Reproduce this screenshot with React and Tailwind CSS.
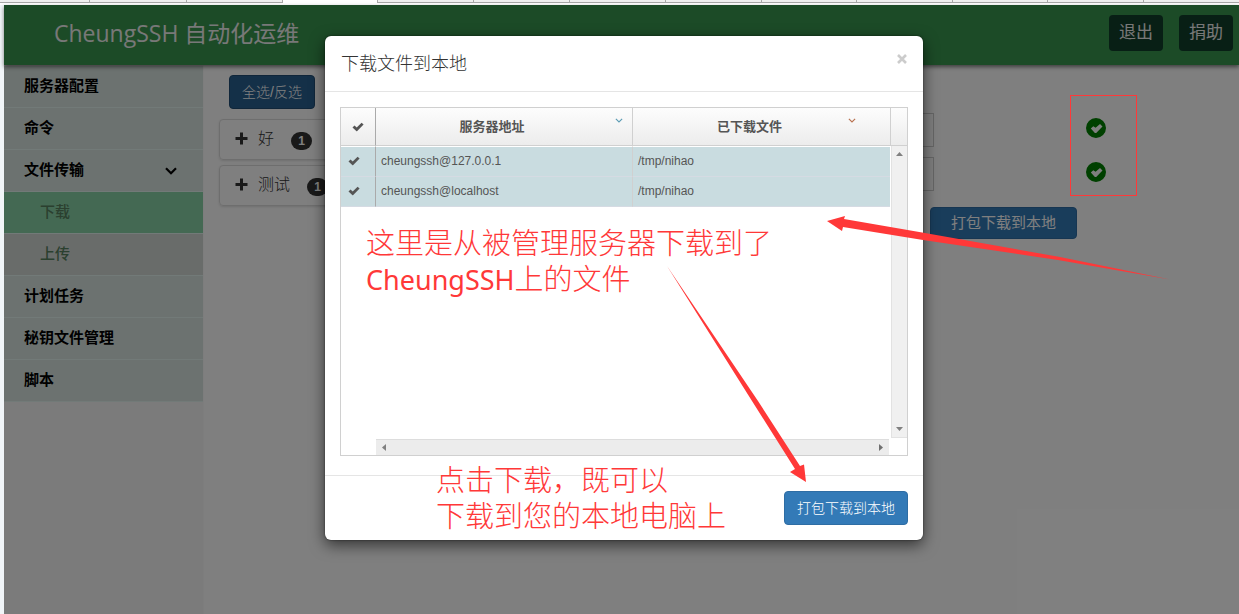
const tabs = [90, 97, 96];
const moreTabs = [96, 96, 96, 96, 95, 96, 95, 96];

const menu = [
  { label: "服务器配置" },
  { label: "命令" },
  { label: "文件传输", open: true },
  { label: "下载", sub: true, active: true },
  { label: "上传", sub: true },
  { label: "计划任务" },
  { label: "秘钥文件管理" },
  { label: "脚本" },
];

const groups = [
  { name: "好", count: 1 },
  { name: "测试", count: 1 },
];

const files = [
  { server: "cheungssh@127.0.0.1", path: "/tmp/nihao" },
  { server: "cheungssh@localhost", path: "/tmp/nihao" },
];

function Tick({ className }) {
  return (
    <svg viewBox="0 0 12 10" fill="currentColor" className={`h-2.5 w-3 ${className}`} aria-hidden="true">
      <path d="M0.500 5.600L2.500 3.600L4.700 5.500L9.600 0.700L11.600 2.500L5 9.300H4.500Z" />
    </svg>
  );
}

function Chevron({ className, weight }) {
  return (
    <svg viewBox="0 0 12 8" fill="none" stroke="currentColor" strokeWidth={weight} className={className} aria-hidden="true">
      <path d="M1 1.300L6 6.300L11 1.300" />
    </svg>
  );
}

function Plus() {
  return (
    <svg viewBox="0 0 13 13" fill="currentColor" className="mr-2.5 size-[13px]" aria-hidden="true">
      <path d="M5 0.500H8V5H12.500V8H8V12.500H5V8H0.500V5H5Z" />
    </svg>
  );
}

function Done({ className }) {
  return (
    <svg viewBox="0 0 20 20" className={`size-5 ${className}`} aria-hidden="true">
      <path
        fill="#008000"
        fillRule="evenodd"
        d="M10 0A10 10 0 1 1 10 20A10 10 0 1 1 10 0ZM4.800 10.500L8.900 15L10.200 15L16.500 8.600L14 6.100L9.600 9.800L7.300 8.200Z"
      />
    </svg>
  );
}

function TabStrip() {
  return (
    <div className="flex h-[5px] shrink-0 overflow-hidden bg-white" aria-hidden="true">
      <div className="flex h-[3px] bg-[#f0f0f0]">
        {tabs.map((w, i) => (
          <div key={i} className="h-full shrink-0 border-r border-b border-[#a8a8a8]" style={{ width: w }} />
        ))}
      </div>
      <div className="h-full w-[94px] shrink-0" />
      <div className="flex h-[3px] grow border-b border-l border-[#a8a8a8] bg-[#f0f0f0]">
        {moreTabs.map((w, i) => (
          <div key={i} className="h-full shrink-0 border-r border-[#a8a8a8]" style={{ width: w }} />
        ))}
      </div>
    </div>
  );
}

function Header() {
  return (
    <header className="relative flex h-[60px] items-center justify-between bg-[#38964e] pr-1.5 pl-[50px] shadow-[0_2px_4px_rgba(0,0,0,0.5)]">
      <h1 className="pb-1 font-['Open_Sans','Noto_Sans_CJK_SC',sans-serif] text-[23px] text-[#f0f0f0]">
        CheungSSH 自动化运维
      </h1>
      <div className="flex gap-4 pb-1">
        {["退出", "捐助"].map((t) => (
          <button key={t} type="button" className="h-9 w-[54px] rounded bg-[#103e2a] text-[17px] text-[#f0f0f0]">
            {t}
          </button>
        ))}
      </div>
    </header>
  );
}

function rowColor(item) {
  if (item.active) return "bg-[#88d2a6] pl-9 font-medium text-[#56805f]";
  if (item.sub) return "bg-[#d2d8d5] pl-9 font-medium text-[#56805f]";
  return "bg-[#d9e5e1] pl-5 font-bold text-black";
}

function Sidebar() {
  return (
    <nav className="w-[200px] shrink-0 border-r border-[#fafafa] bg-[#f6f6f6] pt-px">
      <ul>
        {menu.map((item) => (
          <li key={item.label}>
            <a
              href="#"
              className={`flex h-[42px] items-center justify-between border-b border-[#e4f4f0] pr-[26px] text-[15px] ${rowColor(item)}`}
            >
              {item.label}
              {item.open && <Chevron weight="2.200" className="h-2 w-3" />}
            </a>
          </li>
        ))}
      </ul>
    </nav>
  );
}

function Main() {
  return (
    <main className="flex grow">
      <section className="w-[260px] shrink-0 pt-2.5 pl-[15px]">
        <button
          type="button"
          className="ml-2.5 h-[34px] w-[86px] rounded border border-[#204d74] bg-[#286090] text-sm font-light text-white"
        >
          全选/反选
        </button>
        <ul className="mt-2.5 flex flex-col gap-[5px]">
          {groups.map((g) => (
            <li
              key={g.name}
              className="flex h-[41px] items-center rounded-sm border border-[#ddd] pb-0.5 pl-[15px] text-base font-light text-[#333] shadow-sm"
            >
              <Plus />
              {g.name}
              <span className="mt-1 ml-[17px] flex h-[18px] w-[21px] items-center justify-center rounded-full bg-[#333] text-xs font-bold text-white">
                {g.count}
              </span>
            </li>
          ))}
        </ul>
      </section>
      <section className="grow pt-12">
        {files.map((f) => (
          <div key={f.server} className="mb-2.5 flex h-[34px]">
            <input
              aria-label={f.server}
              className="h-full w-[470px] border border-[#ccc] bg-white px-3"
            />
            <Done className="mt-[5px] ml-[152px]" />
          </div>
        ))}
        <button
          type="button"
          className="mt-1.5 ml-[466px] h-8 w-[147px] rounded border border-[#2e6da4] bg-[#337ab7] text-[15px] text-white"
        >
          打包下载到本地
        </button>
      </section>
    </main>
  );
}

function FileTable() {
  return (
    <div className="flex h-[349px] flex-col border border-[#d0d0d0] text-xs text-[#555]">
      <div className="flex min-h-0 grow">
        <table className="grow table-fixed border-separate border-spacing-0 self-start">
          <colgroup>
            <col className="w-[35px]" />
            <col className="w-[257px]" />
            <col />
          </colgroup>
          <thead>
            <tr className="h-[38px] [&>th]:border-b [&>th]:border-b-[#d0d0d0] [&>th]:bg-linear-to-b [&>th]:from-[#fdfdfd] [&>th]:to-[#ececec]">
              <th className="border-r border-r-[#aaa] p-0">
                <Tick className="mx-auto" />
              </th>
              <th className="relative border-r border-r-[#d0d0d0] p-0 text-[13px] font-bold">
                <span className="pr-6">服务器地址</span>
                <Chevron weight="1.800" className="absolute top-2.5 right-[9px] h-[5px] w-2 text-[#5b9cb4]" />
              </th>
              <th className="relative p-0 text-[13px] font-bold">
                <span className="pr-6">已下载文件</span>
                <Chevron weight="1.800" className="absolute top-2.5 right-[34px] h-[5px] w-2 text-[#b8714f]" />
              </th>
            </tr>
          </thead>
          <tbody>
            {files.map((f) => (
              <tr
                key={f.server}
                className="h-[30px] first:h-[31px] [&:first-child>td]:border-t [&:first-child>td]:border-t-white [&>td]:border-b [&>td]:border-b-[#d5dbe3] [&>td]:bg-[#c9dce0] [&>td]:pt-0 [&>td]:pb-0.5"
              >
                <td className="border-r border-r-[#aaa] pr-0 pl-[7px]">
                  <Tick className="block" />
                </td>
                <td className="border-r border-r-[#d0d0d0] pl-[5px]">{f.server}</td>
                <td className="pl-[5px]">{f.path}</td>
              </tr>
            ))}
          </tbody>
        </table>
        <div className="flex w-[17px] shrink-0 flex-col">
          <div className="h-[38px] shrink-0 border-b border-l border-[#d0d0d0] bg-linear-to-b from-[#fdfdfd] to-[#ececec]" />
          <div className="ml-px flex grow flex-col items-center justify-between border-b border-l border-[#e2e2e2] bg-[#f0f0f0] py-1.5">
            <svg width="7" height="4" viewBox="0 0 7 4"><path d="M0 4L3.5 0L7 4Z" fill="#808080" /></svg>
            <svg width="7" height="4" viewBox="0 0 7 4"><path d="M0 0L3.5 4L7 0Z" fill="#808080" /></svg>
          </div>
        </div>
      </div>
      <div className="mt-px mr-[18px] ml-[35px] flex h-4 shrink-0 items-center justify-between border-t border-[#ddd] bg-[#ececec] px-1.5">
        <svg width="4" height="7" viewBox="0 0 4 7"><path d="M4 0L0 3.5L4 7Z" fill="#808080" /></svg>
        <svg width="4" height="7" viewBox="0 0 4 7"><path d="M0 0L4 3.5L0 7Z" fill="#707070" /></svg>
      </div>
    </div>
  );
}

function Notes() {
  return (
    <div className="pointer-events-none absolute inset-0 font-['Liberation_Sans','Noto_Sans_CJK_SC',sans-serif] text-[29px] leading-9 font-light text-[#ff3838]">
      <p className="absolute top-[190px] left-[41px] whitespace-nowrap">
        这里是从被管理服务器下载到了
        <br />
        <span className="font-['Noto_Sans',sans-serif] text-[27px] leading-8 font-normal">CheungSSH</span>上的文件
      </p>
      <p className="absolute top-[427px] left-[111px] whitespace-nowrap">
        点击下载，既可以
        <br />
        下载到您的本地电脑上
      </p>
      <svg className="absolute top-0 left-0 overflow-visible" width="598" height="504" viewBox="325 36 598 504" fill="#ff3838">
        <path d="M667 266L758 401L800 466L804 464.500L806 482L790 472L795 469L752 401Z" />
        <path d="M827 221L845 216L844 219L925 233L1060 257L1170 279.500L1058 260L923 240L843 227L842 231Z" />
      </svg>
      <div className="absolute top-[59px] left-[745px] h-[101px] w-[67px] border border-[#ff3838]" />
    </div>
  );
}

function DownloadDialog() {
  return (
    <div
      role="dialog"
      aria-labelledby="dialog-title"
      className="relative mt-[31px] w-[598px] self-start rounded-md bg-white shadow-[0_5px_15px_rgba(0,0,0,0.6),0_0_2px_rgba(0,0,0,0.6)]"
    >
      <div className="flex h-14 items-center justify-between border-b border-[#e5e5e5] px-4">
        <h2 id="dialog-title" className="text-lg font-light text-[#333]">
          下载文件到本地
        </h2>
        <button type="button" aria-label="关闭" className="mb-2.5 text-[#ccc]">
          <svg viewBox="0 0 10 10" className="size-2.5" fill="none" stroke="currentColor" strokeWidth="2.600">
            <path d="M1 1L9 9M9 1L1 9" />
          </svg>
        </button>
      </div>
      <div className="px-[15px] pt-[15px] pb-[19px]">
        <FileTable />
      </div>
      <div className="flex justify-end border-t border-[#e5e5e5] p-[15px]">
        <button
          type="button"
          className="h-[34px] w-[124px] rounded border border-[#2e6da4] bg-[#337ab7] text-sm font-light text-white"
        >
          打包下载到本地
        </button>
      </div>
      <Notes />
    </div>
  );
}

export default function App() {
  return (
    <div className="flex min-h-screen flex-col overflow-hidden bg-[#f1f5f8] font-['Liberation_Sans','Noto_Sans_CJK_SC',sans-serif]">
      <TabStrip />
      <div className="relative ml-1 flex grow flex-col bg-white">
        <Header />
        <div className="flex grow">
          <Sidebar />
          <Main />
        </div>
        <div className="absolute inset-0 flex justify-center bg-black/50 pl-[5px]">
          <DownloadDialog />
        </div>
      </div>
    </div>
  );
}
